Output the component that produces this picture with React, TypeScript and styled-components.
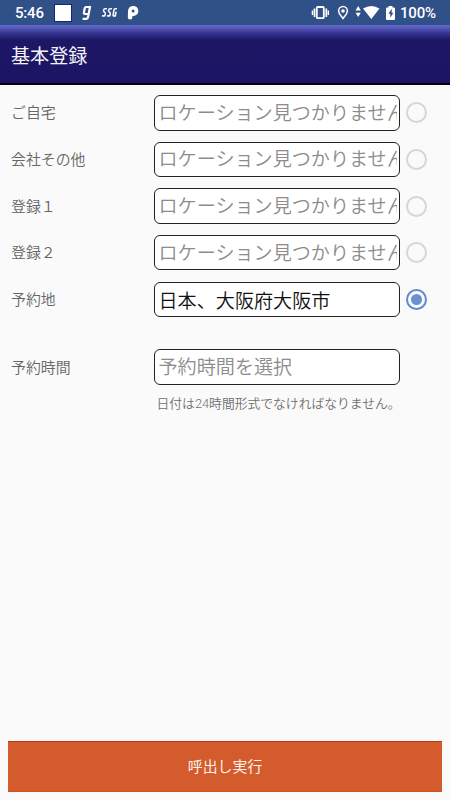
import React from "react";
import styled, { createGlobalStyle } from "styled-components";

const Global = createGlobalStyle`
  * { box-sizing: border-box; }
  body { margin: 0; background: #fafafa; }
`;
const Screen = styled.div`
  width: 450px;
  height: 800px;
  overflow: hidden;
  display: flex;
  flex-direction: column;
  background: #fafafa;
  color: #757575;
  font-family: Roboto, "Noto Sans CJK JP", sans-serif;
  font-weight: 350;
`;
const StatusBar = styled.div`
  height: 25px;
  flex: none;
  background: #305088;
  color: #fff;
  display: flex;
`;
const StatusText = styled.span<{ $left: number; $width: number }>`
  font: 500 15px/25px Roboto, sans-serif;
  margin-left: ${(p) => p.$left}px;
  width: ${(p) => p.$width}px;
  white-space: nowrap;
  padding-top: 1px;
  letter-spacing: -0.2px;
`;
const StatusIcons = styled.svg`
  display: block;
  flex: none;
  height: 25px;
`;
const Header = styled.header`
  height: 60px;
  flex: none;
  padding: 2px 11px 0;
  display: flex;
  align-items: center;
  color: #f4f2f8;
  font-size: 19.1px;
  font-weight: 400;
  border-bottom: 2px solid #03020c;
  background: linear-gradient(#6468cc 0, #5558b8 3px, #32318a 9px, #1d1766 15px, #1c1464 100%);
`;
const Form = styled.form`
  flex: 1;
  padding-top: 10px;
`;
const Row = styled.div<{ $gap?: number }>`
  height: 35.5px;
  margin-bottom: ${(p) => p.$gap ?? 11.15}px;
  display: flex;
  align-items: center;
`;
const Label = styled.label`
  width: 153.5px;
  padding: 0 0 2px 11px;
  font-size: 14.9px;
  color: #666;
`;
const Field = styled.input`
  width: 246px;
  height: 100%;
  margin: 0;
  padding: 1px 2px 0 4px;
  border: 1px solid #222;
  border-radius: 6px;
  background: #fff;
  color: #111;
  font: inherit;
  font-size: 19.1px;
  outline: none;
  &::placeholder { color: #8c8c8c; opacity: 1; }
`;
const Radio = styled.span<{ $on?: boolean }>`
  width: 21px;
  height: 21px;
  margin-left: 6.5px;
  border-radius: 50%;
  border: 2px solid ${(p) => (p.$on ? "#5f8ad0" : "#d6d6d6")};
  display: grid;
  place-items: center;
  &::after {
    content: "";
    width: 11px;
    height: 11px;
    border-radius: 50%;
    background: ${(p) => (p.$on ? "#6a90d2" : "transparent")};
  }
`;
const Hint = styled.p`
  margin: 0 0 0 156.5px;
  font-size: 12.8px;
  line-height: 18px;
  white-space: nowrap;
  color: #707070;
`;
const Submit = styled.button`
  flex: none;
  width: 433.5px;
  height: 50.5px;
  margin: 0 0 8.5px 8.3px;
  padding: 0 0 2px;
  border: 0;
  border-top: 1px solid #c43311;
  border-bottom: 1px solid #d25016;
  background: #d45b2c;
  color: #fff0ea;
  font: inherit;
  font-weight: 400;
  font-size: 14.9px;
`;

const places = [
  { label: "ご自宅" },
  { label: "会社その他" },
  { label: "登録１" },
  { label: "登録２" },
  { label: "予約地", value: "日本、大阪府大阪市" },
];

const NotificationIcons = () => (
  <StatusIcons width="95" viewBox="50 0 95 25">
    <rect x="54.5" y="4.5" width="17" height="17" fill="#fff" stroke="#17227a" strokeWidth="1" />
    <path
      d="M89.800 7h-3.600q-1.200 0-1.500 1.300l-.8 4.300q-.2 1.400 1 1.400h3.600M90.200 6l-2.200 11.300q-.3 1.500-1.700 1.500h-3.700"
      fill="none"
      stroke="#fff"
      strokeWidth="2.2"
      strokeLinejoin="round"
    />
    <g fill="none" stroke="#f0f4ff" strokeWidth="1.6">
      <path d="M107 8.800h-2.200q-.8 0-1 .9l-.2 1q-.1.800.6 1.200l.7.5q.6.4.4 1.300l-.2 1.300q-.2.900-1 .9H102M112 8.800h-2.200q-.8 0-1 .9l-.2 1q-.1.800.6 1.200l.7.5q.6.4.4 1.300l-.2 1.300q-.2.900-1 .9H107M117 8.800h-2q-.8 0-1 .9l-.9 5.300q-.1.900.7.9h1.500l.6-3.300h-1" />
    </g>
    <path
      fill="#fff"
      fillRule="evenodd"
      d="M128 12c0-3.900 2-6 5.300-6s5 2.300 5 5.100-2 4.800-4.900 4.800h-1V17.300a2.300 2.300 0 0 1-4.600 0zm5.100-2.500a1.500 1.500 0 1 0 0 3 1.500 1.500 0 0 0 0-3z"
    />
  </StatusIcons>
);

const SystemIcons = () => (
  <StatusIcons width="92" viewBox="308 0 92 25">
    <g fill="none" stroke="#fff">
      <rect x="316.800" y="7" width="7" height="11.200" rx="1" strokeWidth="1.800" />
      <path d="M314.500 8.500v8.500M326.300 8.500v8.500" strokeWidth="1.700" />
      <path d="M312.500 10.500v4.500M328.300 10.500v4.500" strokeWidth="1.500" />
      <path d="M343 18.500c-2.300-2.700-4.400-5.100-4.400-7.700a4.400 4.400 0 0 1 8.800 0c0 2.600-2.100 5-4.400 7.700z" strokeWidth="1.500" />
    </g>
    <circle cx="343" cy="11" r="1.800" fill="#fff" />
    <path fill="#fff" d="m358.200 6 2.600 4.500h-5.200zM358.200 17l2.600-4.300h-5.200zM363 8.500q8.400-5 16.500 0L371.300 19z" />
    <path fill="#fff" d="M388.500 7.500V6h4v1.500h1.500q1 0 1 1v10.500q0 1-1 1h-7q-1 0-1-1v-10.500q0-1 1-1z" />
    <path fill="#305088" d="m391.700 8.800-3.300 5h1.900v4l3.100-5h-1.700z" />
  </StatusIcons>
);

export default function App() {
  return (
    <>
      <Global />
      <Screen>
        <StatusBar>
          <StatusText $left={15} $width={35}>5:46</StatusText>
          <NotificationIcons />
          <StatusText $left={163} $width={0} />
          <SystemIcons />
          <StatusText $left={0} $width={40}>100%</StatusText>
        </StatusBar>
        <Header>基本登録</Header>
        <Form>
          {places.map((p, i) => (
            <Row key={p.label} $gap={i === places.length - 1 ? 32.4 : undefined}>
              <Label>{p.label}</Label>
              <Field readOnly value={p.value ?? ""} placeholder="ロケーション見つかりません" />
              <Radio $on={!!p.value} />
            </Row>
          ))}
          <Row $gap={10}>
            <Label>予約時間</Label>
            <Field readOnly value="" placeholder="予約時間を選択" />
          </Row>
          <Hint>日付は24時間形式でなければなりません。</Hint>
        </Form>
        <Submit type="button">呼出し実行</Submit>
      </Screen>
    </>
  );
}
